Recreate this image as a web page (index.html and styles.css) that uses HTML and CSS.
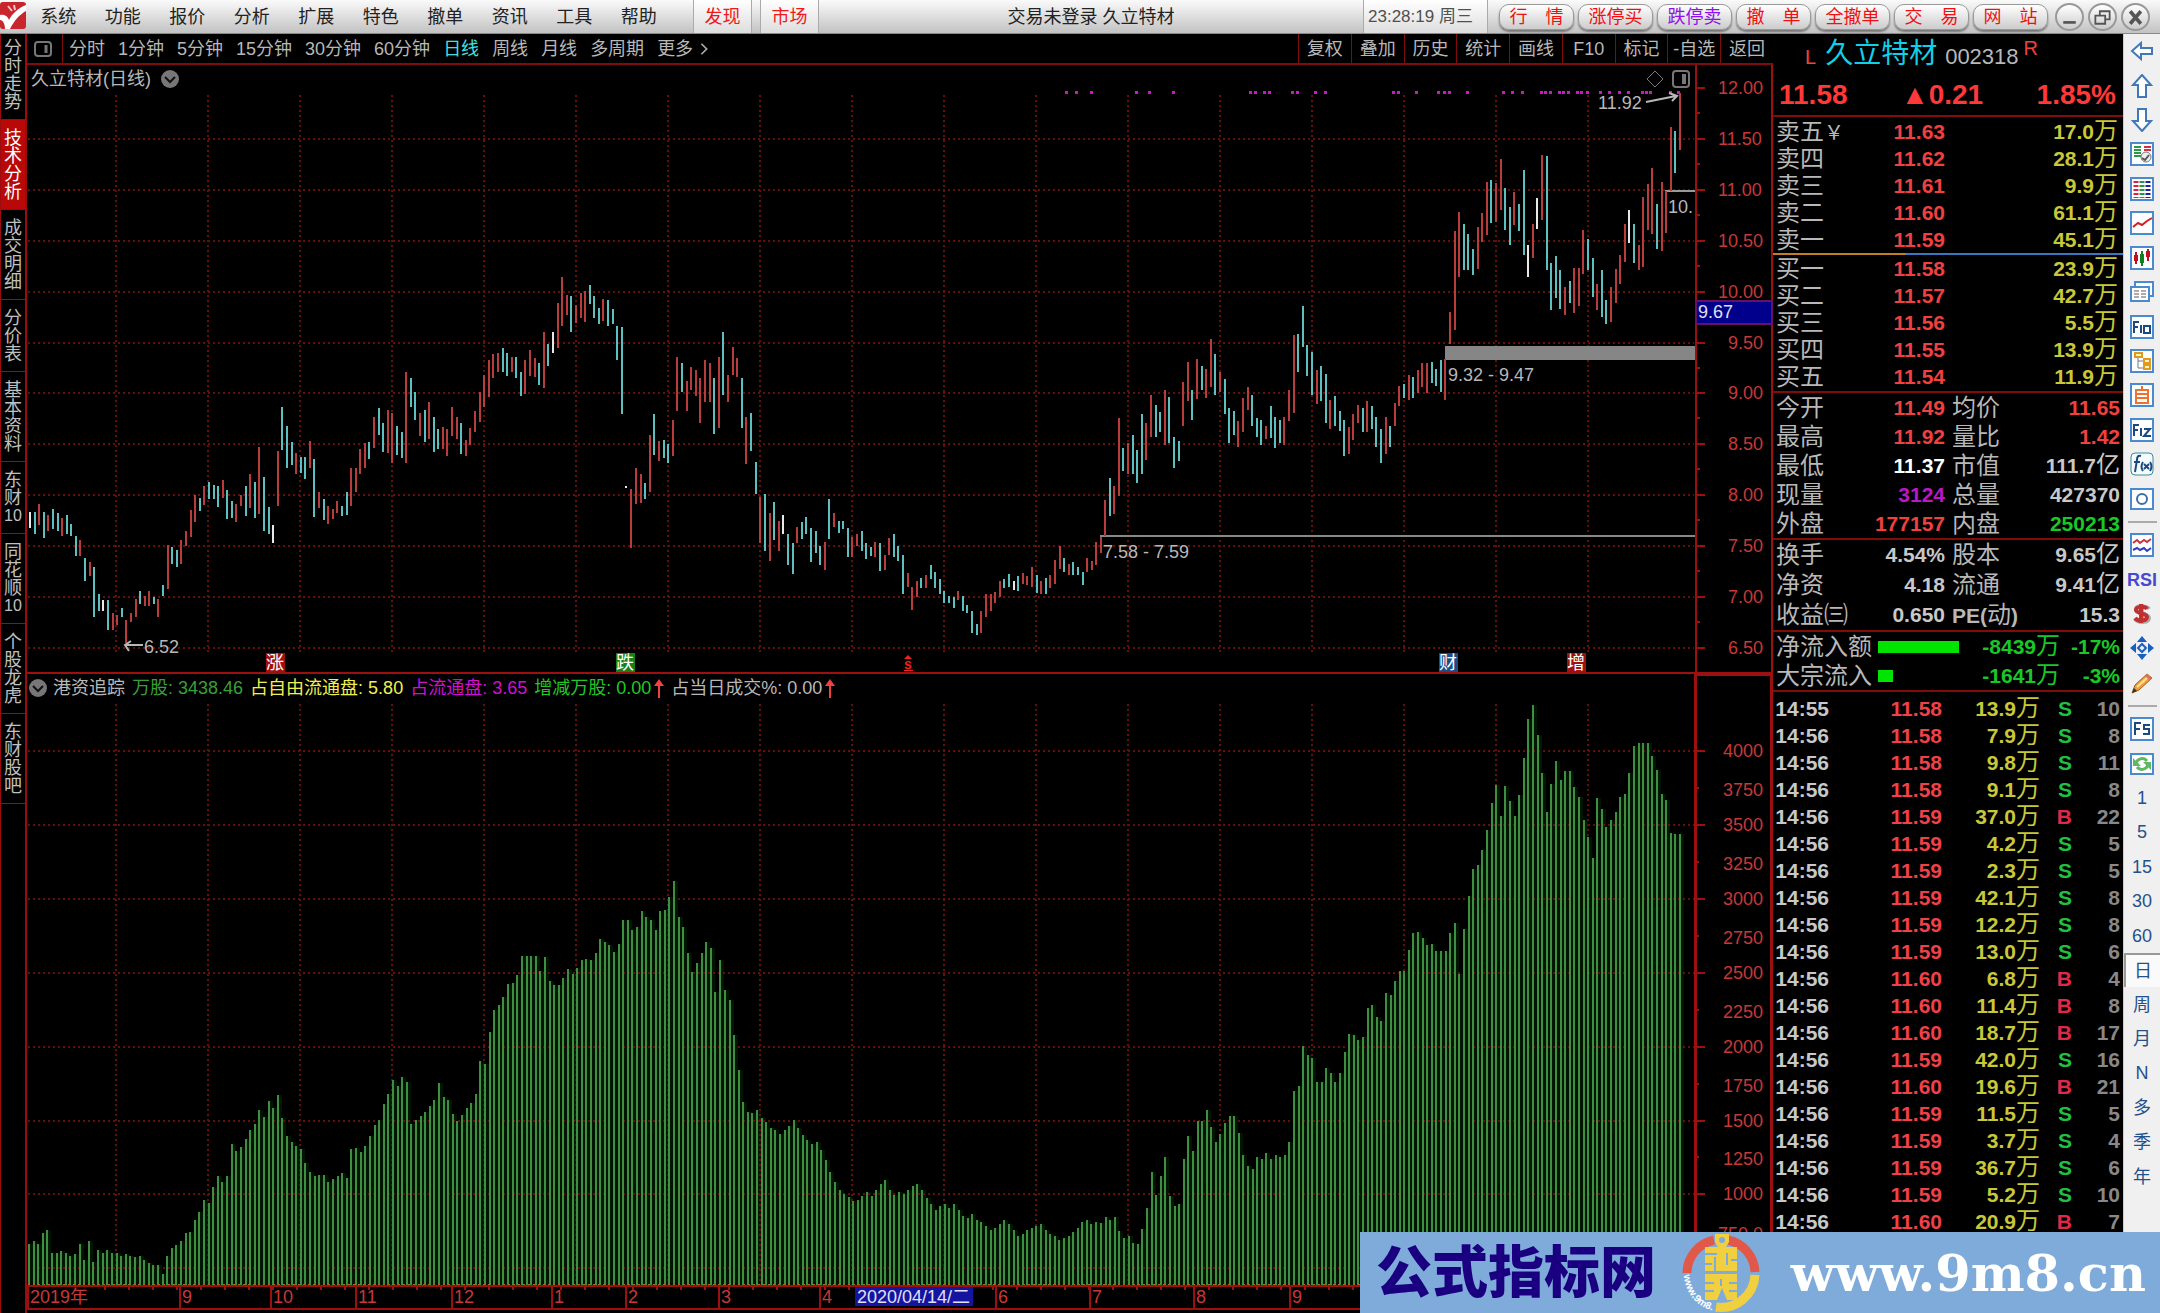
FILE: index.html
```html
<!DOCTYPE html>
<html lang="zh-CN">
<head>
<meta charset="utf-8">
<title>久立特材 002318</title>
<link rel="stylesheet" href="styles.css">
</head>
<body>
<header class="topbar">
  <svg class="logo" viewBox="0 0 26 30"><rect width="26" height="27" rx="3" fill="#c9252d"/><path d="M0 13C5 12 8 15 9 18C12 12 18 6 26 3V9C19 13 14 19 10 27H5C5 22 3 18 0 18Z" fill="#fff"/><path d="M8 4l4 5M14 3l1 5" stroke="#f6c5c5" stroke-width="2" fill="none"/></svg>
  <nav class="menu">
    <button>系统</button><button>功能</button><button>报价</button><button>分析</button><button>扩展</button><button>特色</button><button>撤单</button><button>资讯</button><button>工具</button><button>帮助</button>
  </nav>
  <button class="hot">发现</button>
  <button class="hot">市场</button>
  <div class="doc-title">交易未登录 久立特材</div>
  <time class="clock">23:28:19 周三</time>
  <div class="actions">
    <button>行　情</button><button>涨停买</button><button class="violet">跌停卖</button><button>撤　单</button><button>全撤单</button><button>交　易</button><button>网　站</button>
  </div>
  <div class="window-buttons">
    <button aria-label="最小化"><svg viewBox="0 0 28 28"><path d="M7 18h14v3H7z" fill="#555"/></svg></button>
    <button aria-label="还原"><svg viewBox="0 0 28 28" fill="none" stroke="#555" stroke-width="2"><path d="M11 12V7h11v9h-5"/><path d="M6 12h11v9H6z"/></svg></button>
    <button aria-label="关闭"><svg viewBox="0 0 28 28" stroke="#555" stroke-width="4"><path d="M8 7l12 14M20 7L8 21"/></svg></button>
  </div>
</header>

<main class="workspace">
  <nav class="side-tabs">
    <button>分时走势</button>
    <button class="active">技术分析</button>
    <button>成交明细</button>
    <button>分价表</button>
    <button>基本资料</button>
    <button>东财<span>10</span></button>
    <button>同花顺<span>10</span></button>
    <button>个股龙虎</button>
    <button>东财股吧</button>
  </nav>

  <section class="charts">
    <div class="chart-toolbar">
      <button class="layout-toggle" aria-label="布局"><svg viewBox="0 0 18 16" fill="none" stroke="#777" stroke-width="2"><rect x="1" y="1" width="16" height="14" rx="3"/><path d="M12 4v8" stroke-width="3"/></svg></button>
      <div class="periods">
        <button>分时</button><button>1分钟</button><button>5分钟</button><button>15分钟</button><button>30分钟</button><button>60分钟</button><button class="active">日线</button><button>周线</button><button>月线</button><button>多周期</button><button>更多<svg viewBox="0 0 10 16" fill="none" stroke="#aaa" stroke-width="2"><path d="M2 2l6 6-6 6"/></svg></button>
      </div>
      <div class="tools">
        <button>复权</button><button>叠加</button><button>历史</button><button>统计</button><button>画线</button><button>F10</button><button>标记</button><button>-自选</button><button>返回</button>
      </div>
    </div>

    <div class="panel">
      <div class="panel-head title-head">
        <h1>久立特材(日线)</h1>
        <svg class="chevron" viewBox="0 0 18 18"><circle cx="9" cy="9" r="9" fill="#777"/><path d="M4 7l5 5 5-5" fill="none" stroke="#111" stroke-width="2"/></svg>
        <svg class="corner" viewBox="0 0 44 20" fill="none" stroke="#777"><path d="M9 2l8 8-8 8-8-8z"/><rect x="27" y="2" width="16" height="16" rx="3" stroke-width="2"/><path d="M38 5v10" stroke-width="4"/></svg>
      </div>
      <svg class="plot" id="price-plot" viewBox="27 65 1746 609"></svg>
    </div>

    <div class="panel">
      <div class="panel-head legend">
        <svg class="chevron" viewBox="0 0 18 18"><circle cx="9" cy="9" r="9" fill="#777"/><path d="M4 7l5 5 5-5" fill="none" stroke="#111" stroke-width="2"/></svg>
        <span>港资追踪</span>
        <span class="lg-green">万股: <b>3438.46</b></span>
        <span class="lg-yellow">占自由流通盘: <b>5.80</b></span>
        <span class="lg-magenta">占流通盘: <b>3.65</b></span>
        <span class="lg-lime">增减万股: <b>0.00</b><svg viewBox="0 0 10 20"><path d="M5 1L0 8h4v12h2V8h4z" fill="#f04040"/></svg></span>
        <span>占当日成交%: <b>0.00</b><svg viewBox="0 0 10 20"><path d="M5 1L0 8h4v12h2V8h4z" fill="#f04040"/></svg></span>
      </div>
      <svg class="plot" id="holding-plot" viewBox="27 674 1746 639"></svg>
    </div>
  </section>

  <aside class="quote">
    <div class="quote-head">
      <div class="quote-name"><span class="flag-l">L</span><strong>久立特材</strong><span class="code">002318</span><span class="flag-r">R</span></div>
      <div class="quote-price"><span>11.58</span><span>▲0.21</span><span>1.85%</span></div>
    </div>
    <table class="levels asks"><tbody>
      <tr><th>卖五<i>￥</i></th><td>11.63</td><td>17.0<i>万</i></td></tr>
      <tr><th>卖四</th><td>11.62</td><td>28.1<i>万</i></td></tr>
      <tr><th>卖三</th><td>11.61</td><td>9.9<i>万</i></td></tr>
      <tr><th>卖二</th><td>11.60</td><td>61.1<i>万</i></td></tr>
      <tr><th>卖一</th><td>11.59</td><td>45.1<i>万</i></td></tr>
    </tbody></table>
    <div class="ratio"></div>
    <table class="levels bids"><tbody>
      <tr><th>买一</th><td>11.58</td><td>23.9<i>万</i></td></tr>
      <tr><th>买二</th><td>11.57</td><td>42.7<i>万</i></td></tr>
      <tr><th>买三</th><td>11.56</td><td>5.5<i>万</i></td></tr>
      <tr><th>买四</th><td>11.55</td><td>13.9<i>万</i></td></tr>
      <tr><th>买五</th><td>11.54</td><td>11.9<i>万</i></td></tr>
    </tbody></table>
    <table class="stats"><tbody>
      <tr><th>今开</th><td class="up">11.49</td><th>均价</th><td class="up">11.65</td></tr>
      <tr><th>最高</th><td class="up">11.92</td><th>量比</th><td class="up">1.42</td></tr>
      <tr><th>最低</th><td class="flat">11.37</td><th>市值</th><td>111.7<i>亿</i></td></tr>
      <tr><th>现量</th><td class="now">3124</td><th>总量</th><td>427370</td></tr>
      <tr><th>外盘</th><td class="up">177157</td><th>内盘</th><td class="down">250213</td></tr>
    </tbody></table>
    <table class="stats finance"><tbody>
      <tr><th>换手</th><td>4.54%</td><th>股本</th><td>9.65<i>亿</i></td></tr>
      <tr><th>净资</th><td>4.18</td><th>流通</th><td>9.41<i>亿</i></td></tr>
      <tr><th>收益㈢</th><td>0.650</td><th><b>PE(</b>动<b>)</b></th><td>15.3</td></tr>
    </tbody></table>
    <table class="flow"><tbody>
      <tr><th>净流入额</th><td><span class="bar" style="width:81px"></span></td><td>-8439<i>万</i></td><td>-17%</td></tr>
      <tr><th>大宗流入</th><td><span class="bar" style="width:15px"></span></td><td>-1641<i>万</i></td><td>-3%</td></tr>
    </tbody></table>
    <table class="ticks"><tbody id="ticks"></tbody></table>
  </aside>

  <nav class="toolstrip">
    <div class="strip-group">
      <button aria-label="后退"><svg viewBox="0 0 24 24" class="arrow"><path d="M2 12l9-8v5h11v6H11v5z"/></svg></button>
      <button aria-label="上移"><svg viewBox="0 0 24 24" class="arrow"><path d="M12 1l9 10h-5v12H8V11H3z"/></svg></button>
      <button aria-label="下移"><svg viewBox="0 0 24 24" class="arrow"><path d="M12 23l9-10h-5V1H8v12H3z"/></svg></button>
      <button aria-label="报表"><svg viewBox="0 0 24 24"><rect class="box" x="1" y="1" width="22" height="22"/><path d="M4 5h7M4 8h7M4 11h7M4 14h7" stroke="#2a9a4a" stroke-width="2"/><path d="M14 5h7M14 8h7" stroke="#d03040" stroke-width="2"/><circle cx="16" cy="15" r="5" fill="#eee" stroke="#777"/><path d="M12 16l3 2 4-5" fill="none" stroke="#555" stroke-width="2"/></svg></button>
      <button aria-label="列表"><svg viewBox="0 0 24 24"><rect class="box" x="1" y="1" width="22" height="22"/><g stroke-width="5" stroke-dasharray="2 2"><path d="M6 4v17" stroke="#e02040"/><path d="M12 4v17" stroke="#209a40"/><path d="M18 4v17" stroke="#2020a0"/></g></svg></button>
      <button aria-label="分时图"><svg viewBox="0 0 24 24"><rect class="box" x="1" y="1" width="22" height="22"/><path d="M3 16l5-4 4 2 5-4 5-3" fill="none" stroke="#d02020" stroke-width="2"/></svg></button>
      <button aria-label="K线"><svg viewBox="0 0 24 24"><rect class="box" x="1" y="1" width="22" height="22"/><path d="M6 6v12M18 3v12" stroke="#c01020" stroke-width="2"/><path d="M12 5v15" stroke="#108020" stroke-width="2"/><path d="M4 9h4v6H4zM16 5h4v6h-4z" fill="#c01020"/><path d="M10 8h4v9h-4z" fill="#108020"/></svg></button>
      <button aria-label="窗口"><svg viewBox="0 0 24 24"><path class="box" d="M5 7V2h18v14h-4"/><rect class="box" x="1" y="7" width="18" height="14"/><path d="M4 11h5M11 11h5M4 14h5M11 14h5M4 17h5M11 17h5" stroke="#655"/></svg></button>
      <button aria-label="F10"><svg viewBox="0 0 24 24"><rect class="box" x="1" y="1" width="22" height="22"/><path d="M4 18V7h5M4 12h4M11 10v8M14 11h6v7h-6z" class="ink"/></svg></button>
      <button aria-label="板块树"><svg viewBox="0 0 24 24"><rect class="box" x="1" y="1" width="22" height="22"/><path d="M8 8v11h6M8 12h6" stroke="#778" fill="none"/><path d="M5 4h7v4H5zM14 10h6v4h-6zM14 16h6v4h-6z" fill="#fff3c0" stroke="#e09a20" stroke-width="2"/></svg></button>
      <button aria-label="自选"><svg viewBox="0 0 24 24"><rect class="box" x="1" y="1" width="22" height="22"/><path d="M12 3v4M6 7h12v13H6zM6 11h12M6 15h12" fill="none" stroke="#f07030" stroke-width="2"/></svg></button>
      <button aria-label="F12"><svg viewBox="0 0 24 24"><rect class="box" x="1" y="1" width="22" height="22"/><path d="M4 18V7h5M4 12h4M11 10v8M14 11h6l-6 7h7" class="ink"/></svg></button>
      <button aria-label="公式"><svg viewBox="0 0 24 24"><rect x="1" y="1" width="22" height="22" rx="4" fill="#f4fbff" stroke="#3a8a9a"/><path d="M11 4c-3-1-4 1-4 4l-2 12M4 10h6M13 10c-2 3-2 6 0 9M20 10c2 3 2 6 0 9M14 12l5 5M19 12l-5 5" class="ink"/></svg></button>
      <button aria-label="圆形"><svg viewBox="0 0 24 24"><rect class="box" x="1" y="2" width="22" height="20"/><circle cx="12" cy="12" r="5" fill="none" stroke="#3a70a8" stroke-width="2"/></svg></button>
    </div>
    <hr>
    <div class="strip-group">
      <button aria-label="指标"><svg viewBox="0 0 24 24"><rect class="box" x="1" y="1" width="22" height="22"/><path d="M3 10l4-3 3 3 4-3 3 2 4-3" fill="none" stroke="#d03040" stroke-width="2"/><path d="M3 17l4-2 3 2 4-2 3 3 4-3" fill="none" stroke="#3040c0" stroke-width="2"/></svg></button>
      <button class="rsi">RSI</button>
      <button aria-label="资金"><svg viewBox="0 0 24 24" fill="none"><path d="M19 7c-2-3-12-4-13 0s13 4 13 9-11 5-14 1M12 2v20" stroke="#aaa" stroke-width="4"/><path d="M17 7c-2-3-11-3-11 1s11 3 11 7-9 5-12 1M11 2v19" stroke="#c03030" stroke-width="4"/></svg></button>
      <button aria-label="移动"><svg viewBox="0 0 24 24" fill="#1a60c0"><path d="M12 0l5 6H7zM12 24l5-6H7zM0 12l6-5v10zM24 12l-6-5v10z"/><path d="M12 8l4 4-4 4-4-4z" fill="none" stroke="#1a60c0" stroke-width="2"/></svg></button>
      <button aria-label="画笔"><svg viewBox="0 0 24 24"><path d="M2 22l3-8L17 3l5 4L9 19z" fill="#f0a030" stroke="#a06020"/><path d="M17 3l5 4-3 2-4-4z" fill="#e07060"/><path d="M2 22l2-5 3 3z" fill="#333"/><path d="M7 16L17 7" stroke="#ffe0a0" stroke-width="2"/></svg></button>
    </div>
    <hr>
    <div class="strip-group">
      <button aria-label="F5"><svg viewBox="0 0 24 24"><rect class="box" x="1" y="1" width="22" height="22"/><path d="M5 18V6h6M5 12h5M20 8h-6v4h5v5h-6" class="ink"/></svg></button>
      <button aria-label="刷新"><svg viewBox="0 0 24 24"><rect class="box" x="1" y="2" width="22" height="20"/><path d="M6 13c0-7 8-8 11-4M18 11c0 7-8 8-11 4" fill="none" stroke="#60b860" stroke-width="3"/><path d="M3 6v8h8zM21 18v-8h-8z" fill="#60b860"/></svg></button>
      <button>1</button><button>5</button><button>15</button><button>30</button><button>60</button><button class="active">日</button><button>周</button><button>月</button><button>N</button><button>多</button><button>季</button><button>年</button>
    </div>
  </nav>
</main>

<footer class="banner">
  <strong>公式指标网</strong>
  <svg class="coin" viewBox="0 0 80 80">
    <path d="M6 40A34 34 0 0 1 33 7M47 7A34 34 0 0 1 74 39" fill="none" stroke="#e25848" stroke-width="9"/>
    <path d="M74 42A34 34 0 0 1 35 74" fill="none" stroke="#f0d040" stroke-width="9"/>
    <path d="M34 1h14v8l-3 5h11v24H24V14h13l-3-5z" fill="#f0d040"/>
    <path d="M24 41h32v26H46l-5-12-5 12H24z" fill="#f0d040"/>
    <circle cx="41" cy="7" r="3" fill="#7fabdb"/>
    <path d="M24 21h12M46 20v12M34 24v14M24 31h7M50 27h6M24 50h9M48 50h8M24 58h9M48 58h8M40 46v7" stroke="#7fabdb" stroke-width="2"/>
    <path id="rim" d="M3 42A38 38 0 0 0 34 78" fill="none"/>
    <text><textPath href="#rim">www.9m8.cn</textPath></text>
  </svg>
  <a href="#">www.9m8.cn</a>
</footer>
<script src="app.js"></script>
</body>
</html>
```
FILE: styles.css
```css
* { box-sizing: border-box; }
body {
  margin: 0;
  min-height: 100vh;
  background: #000;
  color: #b8b8b8;
  font: 18px/20px "Liberation Sans", "Noto Sans CJK SC", sans-serif;
  position: relative;
  overflow: hidden;
}
button {
  font: inherit;
  color: inherit;
  background: none;
  border: 0;
  padding: 0;
  white-space: nowrap;
}
i { font-style: normal; font-weight: 400; }
svg { display: block; }

/* top bar */
.topbar {
  display: flex;
  align-items: center;
  height: 34px;
  background: linear-gradient(#fafafa, #e4e4e4 40%, #c2c2c2);
  border-bottom: 1px solid #888;
  color: #222;
}
.logo { width: 26px; height: 30px; }
.menu { display: grid; grid-template-columns: repeat(10, 1fr); width: 645px; }
.hot {
  width: 59px;
  height: 33px;
  margin-left: 8px;
  color: #f01818;
  border: 1px solid #aaa;
  border-width: 0 1px;
  background: linear-gradient(#fff, #ddd);
}
.menu + .hot { margin-left: 22px; }
.doc-title { flex: 1; text-align: center; }
.clock {
  width: 125px;
  height: 33px;
  padding-left: 4px;
  font-size: 17px;
  line-height: 33px;
  color: #505050;
  border: 1px solid #aaa;
  border-width: 0 1px;
  background: linear-gradient(#fff, #ddd);
}
.actions { display: grid; grid-template-columns: repeat(7, 75px); gap: 4px; margin-left: 11px; }
.actions button {
  height: 26px;
  border-radius: 10px;
  border: 1px solid #999;
  background: linear-gradient(#fff, #ccc);
  box-shadow: 0 2px 2px #777;
  color: #f01010;
}
.actions .violet { color: #9010e8; }
.window-buttons { display: flex; gap: 4px; margin: 0 10px 0 7px; }
.window-buttons button {
  width: 29px;
  height: 28px;
  border: 2px solid #999;
  border-radius: 50%;
  background: linear-gradient(#fff, #ccc);
}

/* workspace */
.workspace { display: grid; grid-template-columns: 27px minmax(0, 1fr) 350px 37px; }

.side-tabs { border: solid #9c0c0c; border-width: 0 2px 0 1px; }
.side-tabs button {
  display: block;
  width: 24px;
  padding: 9px 3px 8px;
  line-height: 18px;
  white-space: normal;
  word-break: break-all;
  color: #c0c0c0;
  border-bottom: 1px solid #9c0c0c;
}
.side-tabs button:first-child { padding: 5px 3px 8px; }
.side-tabs span { display: block; font-size: 16px; line-height: 18px; }
.side-tabs .active { background: #b80808; color: #fff; }

.chart-toolbar {
  display: flex;
  align-items: center;
  height: 31px;
  border-bottom: 2px solid #800c0c;
}
.layout-toggle { width: 36px; height: 29px; padding-left: 7px; border-right: 1px solid #800c0c; }
.layout-toggle svg { width: 18px; height: 16px; }
.periods { display: flex; gap: 13px; padding-left: 6px; }
.periods button { display: flex; align-items: center; gap: 6px; }
.periods svg { width: 10px; height: 14px; }
.periods .active { color: #40e0e0; }
.tools { display: grid; grid-template-columns: repeat(9, 1fr); width: 475px; margin-left: auto; }
.tools button { height: 29px; border-left: 1px solid #800c0c; }

.panel { position: relative; }
.plot { width: 100%; height: auto; }
.plot text { font: 18px "Liberation Sans", "Noto Sans CJK SC", sans-serif; fill: #b8b8b8; }
.plot .axis { fill: #c83838; }
.plot .tag { fill: #fff; text-anchor: middle; }
.plot .pick { fill: #e0e0f0; }
.plot .mark { fill: #f02020; font-size: 14px; font-weight: 700; text-anchor: middle; }
.panel-head {
  position: absolute;
  top: 0;
  left: 0;
  right: 77px;
  height: 27px;
  display: flex;
  align-items: center;
}
h1 { margin: 0; font: inherit; }
.title-head { padding-left: 4px; gap: 10px; }
.chevron { width: 18px; height: 18px; }
.corner { width: 44px; height: 20px; margin-left: auto; margin-right: 6px; }
.legend { padding-left: 2px; gap: 7px; }
.legend .chevron { margin-right: -1px; }
.legend span { display: flex; align-items: center; gap: 5px; }
.legend b { font-weight: 400; }
.legend span svg { width: 10px; height: 20px; margin-left: -2px; }
.lg-green { color: #38a038; }
.lg-yellow { color: #f0f050; }
.lg-magenta { color: #d010d0; }
.lg-lime { color: #20c828; }

/* quote panel */
.quote-head { height: 83px; border-bottom: 2px solid #800c0c; }
.quote-name { display: flex; align-items: center; height: 40px; padding-left: 32px; color: #f04040; font-size: 20px; }
.quote-name strong { margin: 0 8px 0 9px; font-size: 28px; font-weight: 400; color: #10d0e8; }
.code { font-size: 22px; color: #b8b8b8; }
.flag-l { padding-top: 6px; }
.code { padding-top: 6px; }
.flag-r { padding: 0 0 12px 5px; }
.quote-price { display: flex; justify-content: space-between; padding: 7px 7px 0 6px; font-size: 28px; line-height: 28px; font-weight: 700; color: #ff3838; }
.quote table { width: 350px; border-collapse: separate; border-spacing: 0; table-layout: fixed; font-size: 21px; }
.quote th, .quote td { padding: 0; text-align: right; font-weight: 700; white-space: nowrap; }
.quote th { padding-left: 3px; text-align: left; font-size: 24px; font-weight: 400; }
.quote i { font-size: 24px; line-height: 0; }
.quote tr { height: 27px; line-height: 27px; }
.quote td:last-child { padding-right: 3px; }
.levels td:nth-child(2) { width: 100px; color: #f04040; }
.levels th { width: 72px; }
.levels td:last-child { width: 178px; padding-right: 5px; color: #c8c838; }
.levels th i { font-size: 20px; }
.asks { margin-top: 1px; }
.ratio { height: 2px; background: linear-gradient(90deg, #c08020 38%, #3878c0 38%); }
.bids { margin-bottom: 1px; }
.stats { border-top: 2px solid #800c0c; color: #c8c8c8; }
.quote .stats tr, .quote .flow tr { height: 29px; line-height: 29px; }
.stats th { width: 74px; color: #b8b8b8; }
.stats td { width: 98px; }
.quote .stats th:nth-child(3) { padding-left: 7px; }
.stats td:last-child { width: 104px; }
.stats b { font-size: 21px; line-height: 0; }
.quote .finance tr { height: 30px; line-height: 30px; }
.up { color: #f04040; }
.down { color: #18c828; }
.flat { color: #fff; }
.now { color: #b818c8; }
.flow { border: solid #800c0c; border-width: 2px 0; color: #18c828; }
.flow th { width: 105px; color: #b8b8b8; }
.flow td:nth-child(2) { width: 82px; }
.flow td:nth-child(3) { width: 100px; }
.flow .bar { display: block; height: 12px; background: #00e400; }
.ticks { margin-top: 3px; }
.ticks td:nth-child(1) { width: 56px; color: #c8c8c8; }
.ticks td:nth-child(2) { width: 113px; color: #f04048; }
.ticks td:nth-child(3) { width: 98px; color: #c8c838; }
.ticks td:nth-child(4) { width: 32px; color: #20c040; }
.ticks td.buy { color: #e02848; }
.ticks td:nth-child(5) { color: #888; }

/* right tool strip */
.toolstrip { background: #f0f0f0; border-left: 1px solid #ccc; color: #24508c; display: flex; flex-direction: column; }
.strip-group { display: grid; grid-auto-rows: 1fr; height: 482px; }
.strip-group button { display: grid; place-items: center; }
.strip-group svg { width: 24px; height: 24px; }
.strip-group:nth-of-type(2) { height: 172px; }
.toolstrip hr { width: 29px; height: 2px; margin: 5px auto; border: 0; background: #aaa; }
.toolstrip .active { background: #fafafa; border: 2px solid #999; border-width: 2px 0 0 2px; }
.rsi { font-weight: 700; color: #4848d0; }
.arrow path { fill: #fff; stroke: #4078b8; stroke-width: 2; }
.box { fill: #fff; stroke: #4a8ad0; stroke-width: 2; }
.ink { fill: none; stroke: #1c4a80; stroke-width: 2; }

/* banner */
.banner {
  position: absolute;
  right: 0;
  bottom: 0;
  width: 800px;
  height: 81px;
  display: flex;
  align-items: center;
  padding: 0 14px 0 16px;
  background: #7fabdb;
}
.banner strong { font-size: 56px; line-height: 80px; font-weight: 900; color: #1a0080; }
.coin { width: 80px; height: 80px; margin-left: 25px; }
.coin text { font: 700 10px "Liberation Sans", sans-serif; fill: #fff; }
.banner a { margin-left: auto; font: 700 51px/70px "DejaVu Serif", serif; color: #fff; text-decoration: none; }
```
FILE: app.js
```js
const rect = (x, y, w, h, fill) =>
  `<rect x="${x}" y="${y}" width="${w}" height="${h}" fill="${fill}"/>`;
const text = (x, y, s, cls = '') => `<text x="${x}" y="${y}" class="${cls}">${s}</text>`;
const line = (x1, y1, x2, y2, stroke, w, dash = '') =>
  `<line x1="${x1}" y1="${y1}" x2="${x2}" y2="${y2}" stroke="${stroke}" stroke-width="${w}" stroke-dasharray="${dash}"/>`;

const RED = '#9c1010', GRID = '#640f08';
const columns = Array.from({ length: 17 }, (_, i) => Math.round(116 + i * 91.97));

// Each segment: first and last bar x, y origin, units per pixel, then colour + high-low per day.
const candles = [
  { x: [29, 630], top: 250, unit: 3, days: `w785-833 c785-852 r763-825 c785-865 r795-843 c776-838 c789-843 r803-857 c794-852 c821-857 c857-919 r870-919 c924-992 r937-978 c951-1100 c1032-1082 w1050-1082 c1050-1140 r1090-1140 r1095-1126 c1073-1100 r1109-1180 r1090-1117 r1046-1100 c1023-1063 r1037-1068 r1024-1068 c1041-1063 r1046-1100 c1005-1037 r885-1018 c892-942 c901-951 r870-942 r843-887 r781-861 r736-816 c743-784 r709-766 c695-748 c704-748 c709-771 r690-745 c721-807 c753-803 r762-816 r735-767 c709-798 r673-775 c695-803 r591-793 c682-843 c771-852 w825-879 r604-767 c470-600 c528-655 c577-646 r610-673 c622-668 c622-686 r574-654 c628-802 r727-775 c748-811 r767-822 r776-807 r753-789 c767-798 c727-794 r655-767 r655-727 r596-672 r580-655 c577-628 r501-595 c475-555 c519-605 r479-609 r490-640 c528-614 c546-623 r366-640 c384-470 c426-511 r490-559 c479-577 r457-568 c501-605 c537-596 r532-596 r537-617 r470-559 r501-568 c519-613 r570-617 r533-586 r484-545 r427-515 r376-470 r331-441 r312-383 r308-367 c295-367 c308-379 r321-366 c321-384 c367-438 r331-433 r299-379 r325-380 c339-406 r245-415 c281-348 w245-308 r160-294 r80-227 r134-195 c137-245 r165-218 r128-205 r124-217 c106-163 c138-205 c173-221 r146-213 c150-227 c178-221 c227-330 c232-493 w708-713 r718-893` },
  { x: [635, 1100], top: 250, unit: 3, days: `r655-762 r673-760 c699-748 r556-726 c492-614 r573-632 c569-623 c582-640 r511-618 r321-484 c339-426 r393-483 r352-421 r361-439 r384-519 r330-457 r339-457 c384-551 r321-533 c245-435 r376-457 r290-376 r325-380 c384-533 r501-641 c488-602 c636-731 r740-879 c731-902 r789-933 c757-870 r812-902 w794-852 c852-946 c880-973 r830-880 c816-866 c802-852 c835-937 c843-910 c888-946 r875-960 c748-866 r789-830 c812-848 c812-838 c834-920 r860-920 r852-888 c843-902 c880-928 c892-919 r875-920 c880-964 r915-960 r865-915 c853-920 c888-933 c915-1033 r970-1010 r1010-1081 r992-1042 c983-1015 r974-1015 c946-988 c965-1015 c988-1032 c1023-1059 c1037-1060 c1041-1073 r1023-1050 c1037-1082 c1064-1090 c1082-1150 c1122-1154 r1082-1149 r1032-1100 r1032-1082 r1027-1059 r992-1040 c987-1015 c973-1011 w992-1019 c978-1023 r969-1002 r978-1006 r951-1011 c974-1028 r992-1032 c983-1033 r974-1013 r929-1001 r888-957 c924-965 r942-975 c937-974 c951-974 c965-1006 r925-965 r933-960 r875-945 r860-910` },
  { x: [1104, 1679], top: 80, unit: 2.613, days: `r1098-1192 c1041-1139 r1060-1133 r883-1088 c962-1022 r948-1030 c928-1030 c967-1053 c873-1030 r897-994 r823-932 c850-932 c868-920 r811-955 c829-948 c932-1014 c943-995 r790-905 r737-840 c810-889 r729-834 c747-810 r755-830 r678-802 c716-823 r762-814 c782-872 c857-948 c865-928 r892-958 r830-920 r803-861 c822-904 c883-932 c888-955 r904-939 c853-936 c881-962 c888-948 r881-955 r811-892 r667-869 c665-764 c591-697 c693-774 c712-823 r759-846 c747-838 c767-896 r837-913 c826-905 c865-916 c888-983 r908-978 r873-940 r849-896 c857-920 r838-920 c853-913 c881-958 c912-1002 r881-978 c904-959 r845-904 r799-853 c794-830 r771-837 c775-830 r759-819 r740-803 r740-819 c736-791 c755-799 c732-815 r728-837 r606-690 r395-654 r344-516 c375-497 c402-497 c442-509 r383-493 r347-422 r266-406 c262-373 r270-371 r206-340 c281-391 c332-430 r293-379 c324-395 c234-458 w430-516 r376-466 w308-390 r195-367 c199-497 c478-602 c461-569 c497-599 r540-613 c524-584 r490-610 r490-591 r391-508 c415-497 c465-567 r533-602 c497-618 c574-637 r540-633 r493-583 r458-532 r376-476 w340-426 c375-477 r430-497 r305-489 r273-391 r231-403 c323-442 r266-446 r290-399 r124-290 c132-242 r34-184` },
];
const tint = { r: '#b83c3c', c: '#5cc0c0', w: '#e8e8e8' };

function drawPrice() {
  let out = '';
  for (let i = 1; i < 12; i++) {
    const y = Math.round(88 + i * 50.9);
    out += line(28, y, 1694, y, GRID, 2, '2 3');
  }
  for (const x of columns) out += line(x, 95, x, 654, GRID, 2, '2 3');

  const signals = [1066, 1076, 1091, 1136, 1149, 1173, 1250, 1255, 1264, 1269, 1292, 1297, 1315, 1325, 1393, 1398, 1416, 1438, 1444, 1449, 1467, 1503, 1512, 1522, 1541, 1545, 1550, 1559, 1563, 1568, 1577, 1581, 1587, 1600, 1609, 1619, 1628, 1642, 1646, 1650, 1670, 1678];
  for (const x of signals) out += rect(x - 1, 91, 3, 3, '#c818c8');

  out += rect(1445, 346, 250, 14, '#868686') + line(1100, 536, 1695, 536, '#888', 2) + line(1665, 191, 1695, 191, '#999', 2);

  for (const seg of candles) {
    const days = seg.days.split(' ');
    const step = (seg.x[1] - seg.x[0]) / (days.length - 1);
    days.forEach((d, i) => {
      const [hi, lo] = d.slice(1).split('-').map(v => Math.round(seg.top + v / seg.unit));
      out += rect(Math.round(seg.x[0] + i * step), hi, 2, lo - hi, tint[d[0]]);
    });
  }

  out += text(144, 653, '6.52') + '<path d="M143 645H125M131 641l-6 4 4 6" fill="none" stroke="#b8b8b8" stroke-width="2"/>';
  out += text(1598, 109, '11.92') + '<path d="M1646 102L1676 96M1669 93l8 3-5 5" fill="none" stroke="#b8b8b8" stroke-width="2"/>';
  out += text(1103, 558, '7.58 - 7.59') + text(1448, 381, '9.32 - 9.47') + text(1668, 213, '10.');
  for (const [x, s, c] of [[275, '涨', '#a01010'], [625, '跌', '#188018'], [1448, '财', '#1c4c88'], [1576, '增', '#a01010']])
    out += rect(x - 9, 653, 19, 19, c) + text(x, 669, s, 'tag');
  out += '<path d="M904 659l4-4 4 4z" fill="#f02020"/>' + text(908, 669, 's', 'mark') + rect(904, 670, 9, 1, '#f02020');

  out += rect(1695, 65, 2, 609, RED) + rect(1771, 65, 2, 609, RED) + rect(27, 672, 1746, 2, RED);
  for (let i = 0; i < 12; i++) {
    const y = Math.round(87 + i * 50.9), s = (12 - i / 2).toFixed(2);
    out += rect(1697, y, 8, 2, RED) + (i < 11 ? rect(1697, y + 25, 3, 2, RED) : '') + text(s.length > 4 ? 1718 : 1728, y + 7, s, 'axis');
  }
  out += '<rect x="1696" y="301" width="76" height="23" fill="#00008c" stroke="#6a1060" stroke-width="2"/>' + text(1698, 318, '9.67', 'pick');
  document.getElementById('price-plot').innerHTML = out;
}

const holdings = [
  { x: [28, 719], top: 860, unit: 3, tops: [1152,1143,1152,1120,1111,1179,1179,1174,1179,1188,1183,1152,1201,1143,1206,1170,1179,1170,1179,1179,1188,1183,1188,1192,1188,1201,1210,1215,1215,1242,1188,1165,1156,1143,1120,1116,1080,1057,1020,1029,980,949,967,949,851,874,860,836,809,791,750,770,724,743,706,773,827,845,859,868,908,936,949,945,945,967,958,949,940,954,868,864,877,859,827,796,779,733,702,661,679,652,665,792,779,769,755,738,720,670,711,720,761,783,765,743,729,702,602,611,517,450,436,410,373,369,346,288,288,288,288,332,292,364,374,374,355,328,342,324,301,297,300,279,238,247,256,275,251,180,180,211,202,153,171,180,211,153,149,112,63,171,202,279,337,310,279,247,265,396,301] },
  { x: [724, 1095], top: 0, unit: 1, tops: [990,1000,1035,1070,1102,1112,1113,1110,1118,1122,1128,1130,1134,1130,1126,1120,1128,1135,1140,1144,1142,1150,1160,1172,1182,1190,1194,1197,1201,1200,1196,1192,1196,1190,1184,1180,1190,1195,1192,1194,1190,1186,1184,1190,1198,1204,1210,1206,1204,1208,1204,1210,1216,1218,1214,1220,1222,1226,1230,1228,1224,1220,1224,1230,1236,1234,1230,1228,1226,1224,1230,1234,1236,1240,1238,1236,1232,1228,1222,1220,1224,1222] },
  { x: [1100, 1679], top: 680, unit: 2.8, tops: [1519,1504,1512,1504,1542,1562,1558,1575,1580,1537,1478,1378,1441,1390,1335,1444,1474,1466,1340,1277,1319,1235,1235,1205,1251,1294,1272,1239,1222,1222,1269,1331,1361,1369,1336,1340,1323,1340,1331,1336,1331,1294,1150,1138,1024,1049,1057,1126,1126,1087,1100,1126,1100,1041,990,995,1007,999,919,911,944,954,877,881,843,814,814,756,709,705,721,743,739,760,760,760,709,679,822,696,604,528,519,477,420,344,293,382,297,340,382,323,217,108,70,155,260,370,290,226,281,256,256,300,327,391,440,499,331,360,411,391,370,327,319,260,184,176,176,176,214,251,319,335,428,432,432] },
];

function drawHoldings() {
  let out = '', shade = '', bars = '';
  for (const seg of holdings) {
    const step = (seg.x[1] - seg.x[0]) / (seg.tops.length - 1);
    seg.tops.forEach((t, i) => {
      const x = Math.round(seg.x[0] + i * step), y = Math.round(seg.top + t / seg.unit);
      shade += rect(x, y, 5, 1285 - y, '#001600');
      bars += rect(x, y, 2, 1285 - y, '#3f8f42');
    });
  }
  out += shade;
  for (let i = 0; i < 8; i++) {
    const y = Math.round(751 + i * 73.9);
    out += line(28, y, 1694, y, GRID, 2, '2 3');
  }
  for (const x of columns) out += line(x, 704, x, 1285, GRID, 2, '2 3');
  out += bars;

  out += rect(1694, 674, 3, 639, RED) + rect(1770, 674, 3, 639, RED) + rect(1697, 674, 73, 2, RED);
  for (let v = 4000, i = 0; v > 750; v -= 250, i++) {
    const y = Math.round(750 + i * 36.95);
    out += rect(1697, y, i % 2 ? 2 : 8, 2, RED) + text(1723, y + (i % 2 ? 9 : 7), v, 'axis');
  }
  out += text(1718, 1240, '750.0', 'axis');

  out += rect(27, 1285, 1668, 2, RED) + rect(27, 1308, 1668, 2, RED);
  for (let x = 28; x < 1694; x += 5) out += rect(x, 1284, 2, 1, '#c06020');
  for (let x = 104; x < 1694; x += 24) out += rect(x, 1287, 2, 3, RED);
  for (const [x, s] of [[27, '2019年'], [179, '9'], [270, '10'], [355, '11'], [451, '12'], [551, '1'], [625, '2'], [718, '3'], [819, '4'], [995, '6'], [1089, '7'], [1193, '8'], [1289, '9']])
    out += rect(x, 1287, 2, 22, RED) + text(x + 3, 1303, s, 'axis');
  out += rect(855, 1287, 118, 19, '#1414a0') + text(857, 1303, '2020/04/14/二', 'pick');
  document.getElementById('holding-plot').innerHTML = out;
}

const ticks = `14:55 11.58 13.9 S 10
14:56 11.58 7.9 S 8
14:56 11.58 9.8 S 11
14:56 11.58 9.1 S 8
14:56 11.59 37.0 B 22
14:56 11.59 4.2 S 5
14:56 11.59 2.3 S 5
14:56 11.59 42.1 S 8
14:56 11.59 12.2 S 8
14:56 11.59 13.0 S 6
14:56 11.60 6.8 B 4
14:56 11.60 11.4 B 8
14:56 11.60 18.7 B 17
14:56 11.59 42.0 S 16
14:56 11.60 19.6 B 21
14:56 11.59 11.5 S 5
14:56 11.59 3.7 S 4
14:56 11.59 36.7 S 6
14:56 11.59 5.2 S 10
14:56 11.60 20.9 B 7`;

document.getElementById('ticks').innerHTML = ticks.split('\n').map(row => {
  const [t, p, v, side, n] = row.split(' ');
  return `<tr><td>${t}</td><td>${p}</td><td>${v}<i>万</i></td><td class="${side === 'B' ? 'buy' : ''}">${side}</td><td>${n}</td></tr>`;
}).join('');

drawPrice();
drawHoldings();
```
